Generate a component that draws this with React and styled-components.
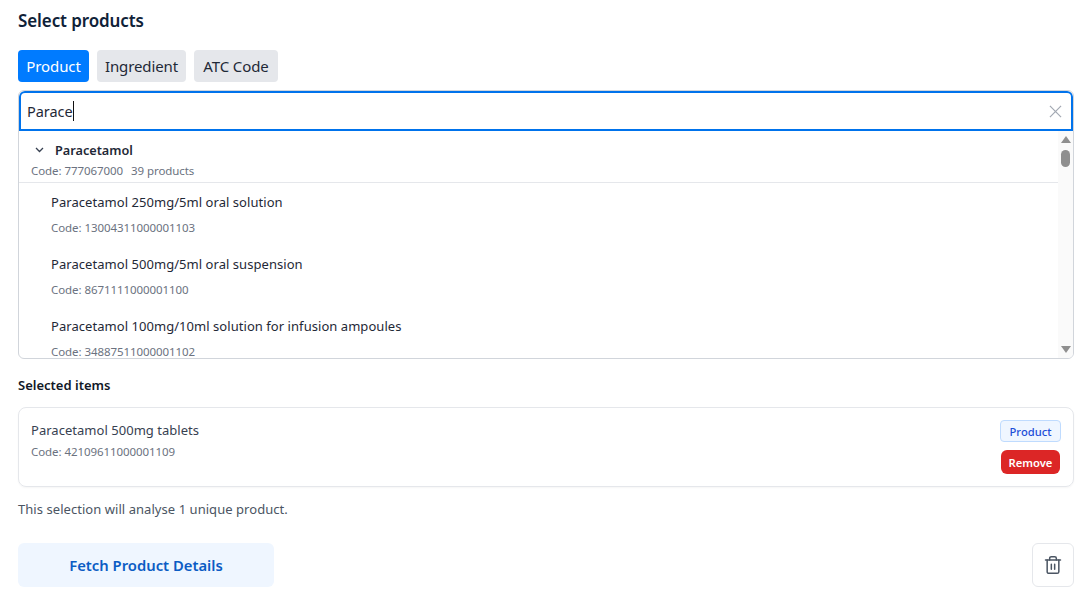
import React from "react";
import styled, { createGlobalStyle } from "styled-components";

const Global = createGlobalStyle`
  html, body { margin: 0; padding: 0; background: #fff; }
  body { font-family: "Noto Sans", "Open Sans", sans-serif; color: #111827; }
  * { box-sizing: border-box; }
`;

const Page = styled.div`
  width: 1087px;
  height: 594px;
  padding: 10px 13px 0 18px;
  overflow: hidden;
`;

const Title = styled.h2`
  margin: 0;
  font-size: 17px;
  line-height: 22px;
  font-weight: 600;
  letter-spacing: -0.1px;
  color: #0f2238;
`;

const Tabs = styled.div`
  display: flex;
  gap: 8px;
  margin-top: 18px;
`;

const Tab = styled.button`
  height: 32px;
  width: ${(p) => p.$w}px;
  border: 0;
  padding: 0;
  border-radius: 4px;
  font: inherit;
  font-size: 15px;
  letter-spacing: -0.1px;
  background: ${(p) => (p.$active ? "#007bff" : "#e5e7eb")};
  color: ${(p) => (p.$active ? "#fff" : "#1f2937")};
`;

const Combo = styled.div`
  margin-top: 8px;
  height: 269px;
  display: flex;
  flex-direction: column;
  border: 1px solid #d1d5db;
  border-radius: 6px;
  overflow: hidden;
`;

const SearchBox = styled.div`
  flex: none;
  height: 40px;
  margin: 0;
  display: flex;
  align-items: center;
  justify-content: space-between;
  padding: 0 9px 0 6px;
  border: 2px solid #0073ec;
  border-radius: 6px 6px 0 0;
  font-size: 14.5px;
  letter-spacing: -0.05px;
  color: #1f2937;
`;

const Typed = styled.span`
  display: inline-block;
  border-right: 1px solid #111;
  line-height: 20px;
`;

const Results = styled.div`
  flex: 1;
  min-height: 0;
  display: flex;
`;

const List = styled.div`
  flex: 1;
  min-width: 0;
  overflow: hidden;
`;

const GroupHead = styled.div`
  height: 52px;
  padding: 9px 0 0 16px;
  border-bottom: 1px solid #e5e7eb;
`;

const GroupName = styled.div`
  display: flex;
  align-items: center;
  gap: 11px;
  height: 20px;
  font-size: 12.7px;
  font-weight: 600;
  color: #1f2937;
`;

const GroupMeta = styled.div`
  display: flex;
  gap: 8px;
  margin: 3px 0 0 -4px;
  font-size: 11.5px;
  line-height: 16px;
  letter-spacing: -0.07px;
  color: #6b7280;
`;

const Item = styled.div`
  height: 62px;
  padding: 9px 0 0 32px;
`;

const ItemName = styled.div`
  font-size: 13px;
  line-height: 20px;
  letter-spacing: 0.05px;
  color: #1f2937;
`;

const ItemCode = styled.div`
  margin-top: 8px;
  font-size: 11.5px;
  line-height: 16px;
  letter-spacing: -0.07px;
  color: #6b7280;
`;

const Scrollbar = styled.div`
  flex: none;
  width: 15px;
  background: #fafafa;
  display: flex;
  flex-direction: column;
  align-items: center;
  padding: 5px 0 5px;
`;

const Thumb = styled.div`
  width: 9px;
  height: 17px;
  margin-top: 7px;
  border-radius: 5px;
  background: #8f8f8f;
`;

const Spacer = styled.div`
  flex: 1;
`;

const SectionLabel = styled.div`
  margin-top: 17px;
  font-size: 13px;
  line-height: 18px;
  font-weight: 600;
  color: #111827;
`;

const Card = styled.div`
  margin-top: 13px;
  height: 80px;
  display: flex;
  justify-content: space-between;
  padding: 12px 12px 0 12px;
  border: 1px solid #e5e7eb;
  border-radius: 8px;
  box-shadow: 0 1px 2px rgba(0, 0, 0, 0.04);
`;

const CardName = styled.div`
  font-size: 13px;
  line-height: 20px;
  letter-spacing: 0.03px;
  color: #374151;
`;

const CardCode = styled.div`
  margin-top: 4px;
  font-size: 11.5px;
  line-height: 16px;
  letter-spacing: -0.07px;
  color: #6b7280;
`;

const CardSide = styled.div`
  display: flex;
  flex-direction: column;
  align-items: center;
  gap: 8px;
`;

const Badge = styled.span`
  width: 61px;
  height: 22px;
  display: flex;
  align-items: center;
  justify-content: center;
  border: 1px solid #bfdbfe;
  border-radius: 4px;
  background: #eff6ff;
  color: #1d4ed8;
  font-size: 11.2px;
  font-weight: 500;
`;

const RemoveBtn = styled.button`
  width: 59px;
  height: 24px;
  border: 0;
  padding: 0;
  border-radius: 6px;
  background: #dc2626;
  color: #fff;
  font: inherit;
  font-size: 11.2px;
  font-weight: 600;
`;

const Note = styled.p`
  margin: 13px 0 0;
  font-size: 13px;
  line-height: 18px;
  letter-spacing: 0.05px;
  color: #4b5563;
`;

const Actions = styled.div`
  margin-top: 25px;
  display: flex;
  justify-content: space-between;
`;

const FetchBtn = styled.button`
  width: 256px;
  height: 44px;
  border: 0;
  padding: 0;
  border-radius: 6px;
  background: #eff6ff;
  color: #0b5cc4;
  font: inherit;
  font-size: 14.8px;
  font-weight: 600;
`;

const TrashBtn = styled.button`
  width: 42px;
  height: 44px;
  display: flex;
  align-items: center;
  justify-content: center;
  padding: 0;
  background: #fff;
  border: 1px solid #e5e7eb;
  border-radius: 6px;
`;

const items = [
  ["Paracetamol 250mg/5ml oral solution", "Code: 13004311000001103"],
  ["Paracetamol 500mg/5ml oral suspension", "Code: 8671111000001100"],
  ["Paracetamol 100mg/10ml solution for infusion ampoules", "Code: 34887511000001102"],
];

export default function App() {
  return (
    <Page>
      <Global />
      <Title>Select products</Title>
      <Tabs>
        <Tab $active $w={71}>Product</Tab>
        <Tab $w={89}>Ingredient</Tab>
        <Tab $w={84}>ATC Code</Tab>
      </Tabs>
      <Combo>
        <SearchBox>
          <Typed>Parace</Typed>
          <svg width="13" height="13" viewBox="0 0 14 14" fill="none" stroke="#a3a9b3" strokeWidth="1.3">
            <path d="M1 1l12 12M13 1L1 13" />
          </svg>
        </SearchBox>
        <Results>
          <List>
            <GroupHead>
              <GroupName>
                <svg width="9" height="6" viewBox="0 0 9 6" fill="none" stroke="#374151" strokeWidth="1.3">
                  <path d="M1 1l3.5 3.5L8 1" />
                </svg>
                Paracetamol
              </GroupName>
              <GroupMeta>
                <span>Code: 777067000</span>
                <span>39 products</span>
              </GroupMeta>
            </GroupHead>
            {items.map(([name, code]) => (
              <Item key={code}>
                <ItemName>{name}</ItemName>
                <ItemCode>{code}</ItemCode>
              </Item>
            ))}
          </List>
          <Scrollbar>
            <svg width="10" height="7" viewBox="0 0 10 7" fill="#8f8f8f"><path d="M5 0l5 7H0z" /></svg>
            <Thumb />
            <Spacer />
            <svg width="10" height="7" viewBox="0 0 10 7" fill="#8f8f8f"><path d="M0 0h10L5 7z" /></svg>
          </Scrollbar>
        </Results>
      </Combo>
      <SectionLabel>Selected items</SectionLabel>
      <Card>
        <div>
          <CardName>Paracetamol 500mg tablets</CardName>
          <CardCode>Code: 42109611000001109</CardCode>
        </div>
        <CardSide>
          <Badge>Product</Badge>
          <RemoveBtn>Remove</RemoveBtn>
        </CardSide>
      </Card>
      <Note>This selection will analyse 1 unique product.</Note>
      <Actions>
        <FetchBtn>Fetch Product Details</FetchBtn>
        <TrashBtn>
          <svg width="20" height="20" viewBox="0 0 24 24" fill="none" stroke="#4b5563" strokeWidth="1.8" strokeLinecap="round" strokeLinejoin="round">
            <path d="M3 6h18" />
            <path d="M19 6v14a2 2 0 0 1-2 2H7a2 2 0 0 1-2-2V6" />
            <path d="M8 6V4a2 2 0 0 1 2-2h4a2 2 0 0 1 2 2v2" />
            <path d="M10 11v6M14 11v6" />
          </svg>
        </TrashBtn>
      </Actions>
    </Page>
  );
}
